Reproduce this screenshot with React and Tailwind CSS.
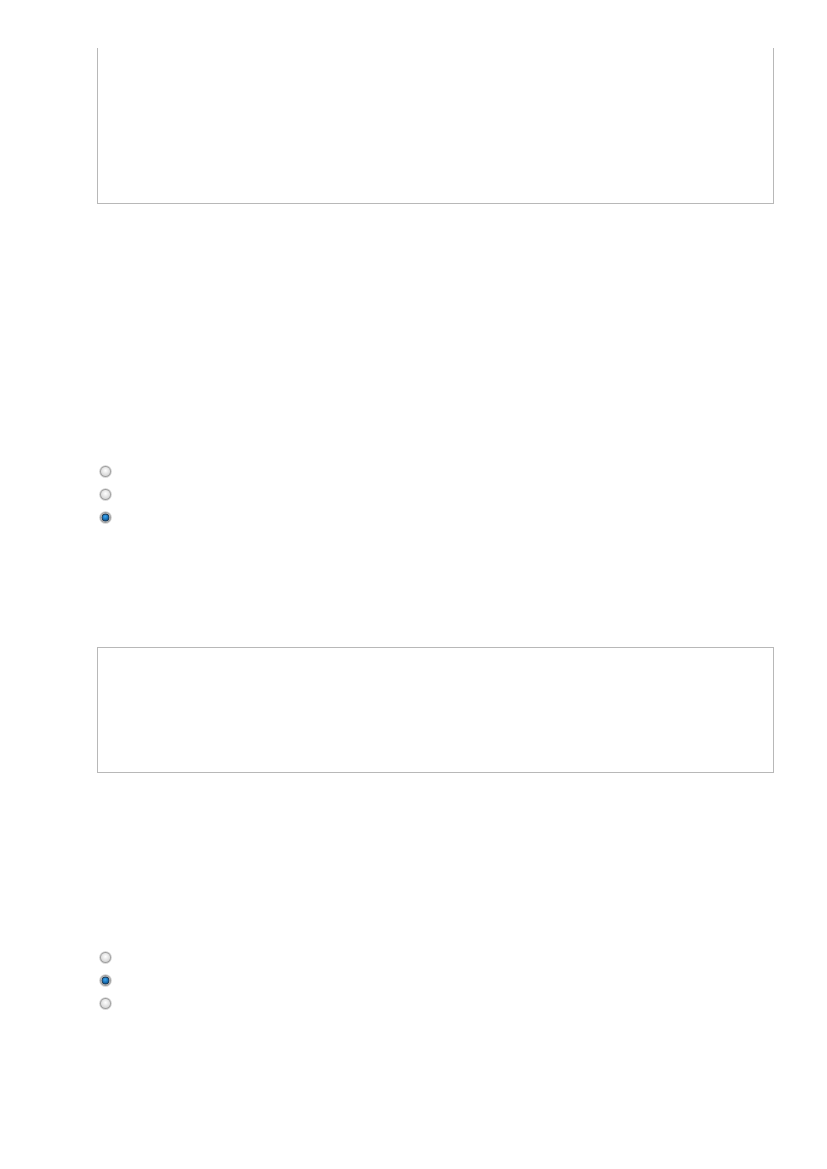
import React from 'react';

const Radio = ({ checked }) => (
  <svg width="13" height="13" viewBox="0 0 13 13" className="block">
    <defs>
      <radialGradient id={checked ? 'rgOn' : 'rgOff'} cx="50%" cy="40%" r="60%">
        <stop offset="0%" stopColor="#ffffff" />
        <stop offset="100%" stopColor="#d4d4d4" />
      </radialGradient>
      <radialGradient id="dot" cx="45%" cy="35%" r="65%">
        <stop offset="0%" stopColor="#3ca6f0" />
        <stop offset="100%" stopColor="#0a5a9c" />
      </radialGradient>
    </defs>
    <circle cx="6.5" cy="6.5" r="6.3" fill="#cfcfcf" />
    <circle cx="6.5" cy="6.5" r="5.4" fill="#9c9c9c" />
    <circle cx="6.5" cy="6.5" r="4.6" fill={`url(#${checked ? 'rgOn' : 'rgOff'})`} />
    {checked && (
      <>
        <circle cx="6.5" cy="6.5" r="3.9" fill="#1f3347" />
        <circle cx="6.5" cy="6.5" r="3.1" fill="url(#dot)" />
      </>
    )}
  </svg>
);

const RadioGroup = ({ selected }) => (
  <div className="flex flex-col gap-[10px] pl-[2px]">
    {[0, 1, 2].map((i) => (
      <Radio key={i} checked={i === selected} />
    ))}
  </div>
);

export default function App() {
  return (
    <div className="min-h-[1169px] bg-white pl-[97px]" style={{ fontFamily: '"Liberation Sans", sans-serif' }}>
      <div className="w-[677px] pt-[48px]">
        <div className="h-[156px] border-x border-b border-[#b8b8b8]" />
        <div className="mt-[261px]">
          <RadioGroup selected={2} />
        </div>
        <div className="mt-[123px] h-[126px] border border-[#b8b8b8]" />
        <div className="mt-[178px]">
          <RadioGroup selected={1} />
        </div>
      </div>
    </div>
  );
}
